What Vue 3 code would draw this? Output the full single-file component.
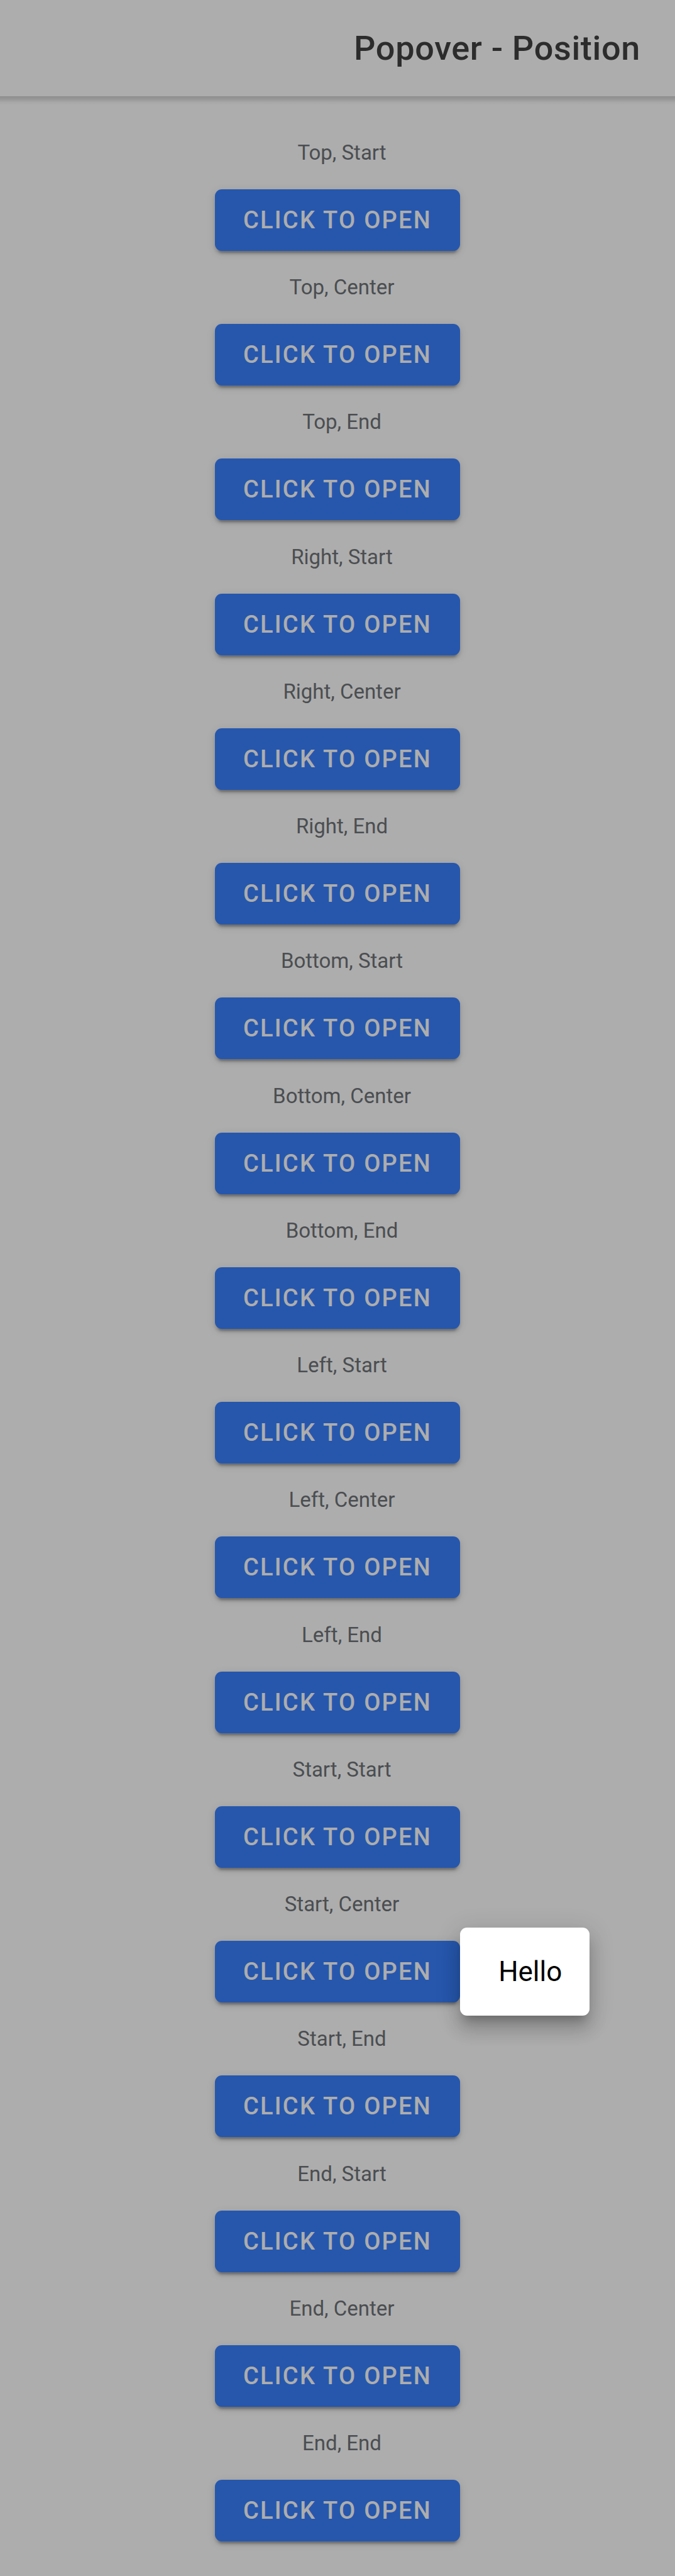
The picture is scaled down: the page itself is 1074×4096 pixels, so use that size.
<script setup>
import { ref } from 'vue'

const sides = ['Top', 'Right', 'Bottom', 'Left', 'Start', 'End']
const alignments = ['Start', 'Center', 'End']
const positions = sides.flatMap((side) => alignments.map((align) => `${side}, ${align}`))

const opened = ref('Start, Center')
</script>

<template>
  <div class="page">
    <header class="toolbar">
      <h1 class="title">Popover - Position</h1>
    </header>
    <main class="content">
      <section v-for="(name, i) in positions" :key="name" class="item">
        <h2 :id="`position-${i}`" class="label">{{ name }}</h2>
        <div class="anchor">
          <button
            type="button"
            class="button"
            :aria-describedby="`position-${i}`"
            @click="opened = name"
          >
            Click to Open
          </button>
          <div v-if="opened === name" class="popover" role="dialog" aria-label="Hello">Hello</div>
        </div>
      </section>
    </main>
    <div v-if="opened" class="backdrop" @click="opened = ''"></div>
  </div>
</template>

<style>
body {
  margin: 0;
}
</style>

<style scoped>
.page {
  position: relative;
  display: flex;
  flex-direction: column;
  min-height: 100vh;
  background: #fff;
  font-family: Roboto, "Liberation Sans", sans-serif;
}

.toolbar {
  position: relative;
  display: flex;
  align-items: center;
  justify-content: flex-end;
  height: 153px;
  padding: 0 55px;
}

/* short shadow cast by the toolbar onto the content */
.toolbar::after {
  content: "";
  position: absolute;
  top: 100%;
  left: 0;
  right: 0;
  height: 14px;
  background: linear-gradient(
    rgba(0, 0, 0, 0.18),
    rgba(0, 0, 0, 0.13) 30%,
    rgba(0, 0, 0, 0.03) 70%,
    rgba(0, 0, 0, 0)
  );
}

.title {
  margin: 0;
  color: #424242;
  font-size: 54px;
  font-weight: 500;
  line-height: 64px;
  letter-spacing: 0.0125em;
}

.content {
  flex: 1;
  display: flex;
  flex-direction: column;
  align-items: center;
  justify-content: space-between;
  padding: 70px 0 55px;
}

.item {
  display: flex;
  flex-direction: column;
  align-items: center;
  gap: 38px;
}

.label {
  margin: 0;
  padding-left: 14px;
  color: #6f7378;
  font-size: 33px;
  font-weight: 400;
  line-height: 40px;
}

.anchor {
  position: relative;
}

.button {
  display: block;
  height: 98px;
  padding: 0 45px;
  border: 0;
  border-radius: 11px;
  background: #3880ff;
  color: #fff;
  font-family: inherit;
  font-size: 38px;
  font-weight: 500;
  letter-spacing: 0.06em;
  text-transform: uppercase;
  white-space: nowrap;
  box-shadow:
    0 8px 3px -5px rgba(0, 0, 0, 0.2),
    0 5px 5px 0 rgba(0, 0, 0, 0.14),
    0 3px 14px 0 rgba(0, 0, 0, 0.12);
}

.backdrop {
  position: absolute;
  inset: 0;
  z-index: 1;
  background: rgba(0, 0, 0, 0.32);
}

.popover {
  position: absolute;
  top: 50%;
  left: 100%;
  z-index: 2;
  transform: translateY(-50%);
  padding: 44px 44px 44px 61px;
  border-radius: 11px;
  background: #fff;
  color: #000;
  font-size: 44px;
  line-height: 52px;
  box-shadow:
    0 14px 14px -8px rgba(0, 0, 0, 0.2),
    0 22px 27px 3px rgba(0, 0, 0, 0.14),
    0 8px 38px 5px rgba(0, 0, 0, 0.12);
}
</style>
